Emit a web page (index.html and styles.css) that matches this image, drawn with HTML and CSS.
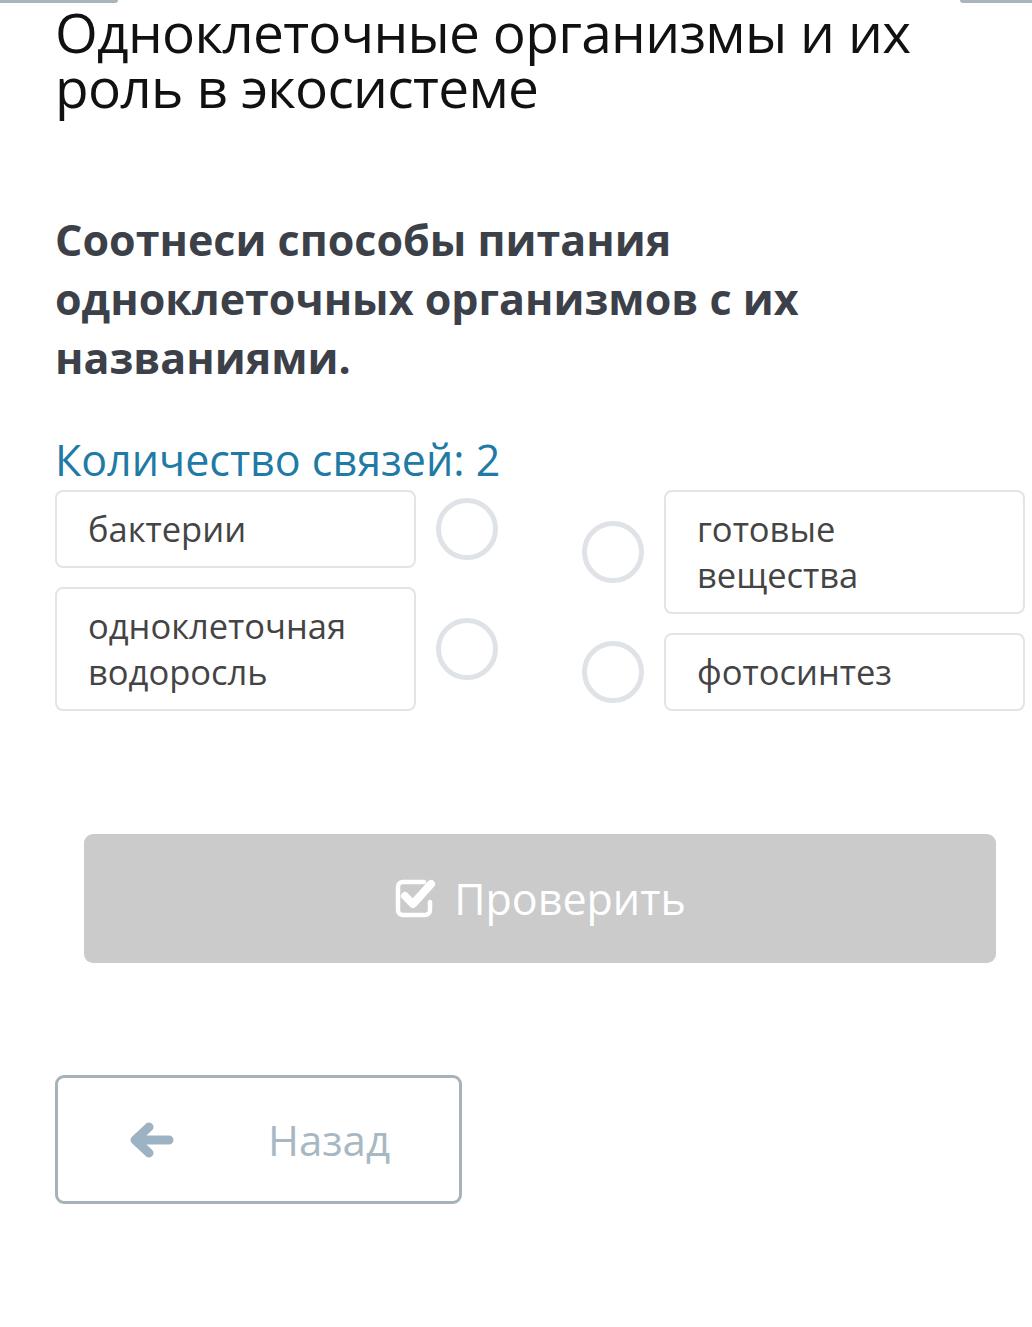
FILE: index.html
```html
<!DOCTYPE html>
<html lang="ru">
<head>
    <meta charset="UTF-8">
    <meta name="viewport" content="width=device-width, initial-scale=1.0">
    <title>Одноклеточные организмы и их роль в экосистеме</title>
    <link rel="stylesheet" href="styles.css">
</head>
<body>
    <div class="top-strip">
        <span class="tab tab-left"></span>
        <span class="tab tab-right"></span>
    </div>

    <div class="page">
        <h1 class="lesson-title">Одноклеточные организмы и их роль в экосистеме</h1>

        <h2 class="task">Соотнеси способы питания одноклеточных организмов с их названиями.</h2>

        <div class="links-count">Количество связей: 2</div>

        <div class="match">
            <div class="match-col">
                <div class="match-item">
                    <div class="match-box">бактерии</div>
                    <span class="dot"></span>
                </div>
                <div class="match-item">
                    <div class="match-box">одноклеточная водоросль</div>
                    <span class="dot"></span>
                </div>
            </div>
            <div class="match-col">
                <div class="match-item">
                    <span class="dot"></span>
                    <div class="match-box">готовые вещества</div>
                </div>
                <div class="match-item">
                    <span class="dot"></span>
                    <div class="match-box">фотосинтез</div>
                </div>
            </div>
        </div>

        <button class="btn-check" type="button">
            <svg class="check-icon" width="44" height="42" viewBox="0 0 44 42">
                <path d="M30 6 H9 A5 5 0 0 0 4 11 V34 A5 5 0 0 0 9 39 H31 A5 5 0 0 0 36 34 V26" fill="none" stroke="#fff" stroke-width="4.5" stroke-linecap="round"/>
                <path d="M11 20 L19 28 L37 8" fill="none" stroke="#fff" stroke-width="8" stroke-linecap="round" stroke-linejoin="round"/>
            </svg>
            Проверить
        </button>

        <button class="btn-back" type="button">
            <svg class="back-icon" width="46" height="40" viewBox="0 0 46 40">
                <path d="M41 20 H10 M21 7 L7 20 L21 33" fill="none" stroke="#9db3c3" stroke-width="9" stroke-linecap="round" stroke-linejoin="round"/>
            </svg>
            <span class="back-label">Назад</span>
        </button>
    </div>
</body>
</html>
```

FILE: styles.css
```css
body {
    margin: 0;
    background-color: #fff;
    font-family: "Open Sans", "Noto Sans", sans-serif;
}
.top-strip {
    display: flex;
    justify-content: space-between;
    height: 4px;
}
.tab {
    display: block;
    height: 3px;
    background-color: #a9b5bd;
}
.tab-left {
    width: 118px;
    border-bottom-right-radius: 4px;
}
.tab-right {
    width: 72px;
    border-bottom-left-radius: 4px;
}
.page {
    padding: 0 7px 0 55px;
}
.lesson-title {
    margin: 0;
    max-width: 900px;
    font-size: 55px;
    font-weight: 400;
    line-height: 55px;
    color: #111;
    letter-spacing: -0.7px;
}
.task {
    margin: 96px 0 0;
    max-width: 800px;
    font-size: 43px;
    font-weight: 700;
    line-height: 59px;
    color: #3c4149;
}
.links-count {
    margin-top: 44px;
    font-size: 43px;
    line-height: 58px;
    color: #1f7aa5;
}
.match {
    display: flex;
    gap: 84px;
    margin-top: 1px;
}
.match-col {
    flex: 1;
    display: flex;
    flex-direction: column;
    gap: 19px;
}
.match-item {
    display: flex;
    align-items: center;
    gap: 20px;
}
.match-box {
    flex: 1;
    border: 2px solid #e2e5e8;
    border-radius: 8px;
    padding: 14px 30px 14px 31px;
    font-size: 34.5px;
    line-height: 46px;
    color: #444;
}
.dot {
    flex: none;
    width: 52px;
    height: 52px;
    border: 5px solid #dfe3e7;
    border-radius: 50%;
}
.btn-check {
    display: flex;
    align-items: center;
    justify-content: center;
    gap: 16px;
    width: 912px;
    height: 129px;
    margin: 123px 0 0 29px;
    border: none;
    border-radius: 9px;
    background-color: #cbcbcb;
    color: #fff;
    font-family: inherit;
    font-size: 43px;
}
.check-icon {
    margin-top: -4px;
}
.btn-back {
    display: flex;
    align-items: center;
    width: 407px;
    height: 129px;
    margin-top: 112px;
    padding: 0 0 0 70px;
    border: 3px solid #a6b3ba;
    border-radius: 9px;
    background-color: #fff;
    font-family: inherit;
    font-size: 42px;
    color: #a8b8c3;
}
.back-label {
    margin-left: 94px;
}
```
